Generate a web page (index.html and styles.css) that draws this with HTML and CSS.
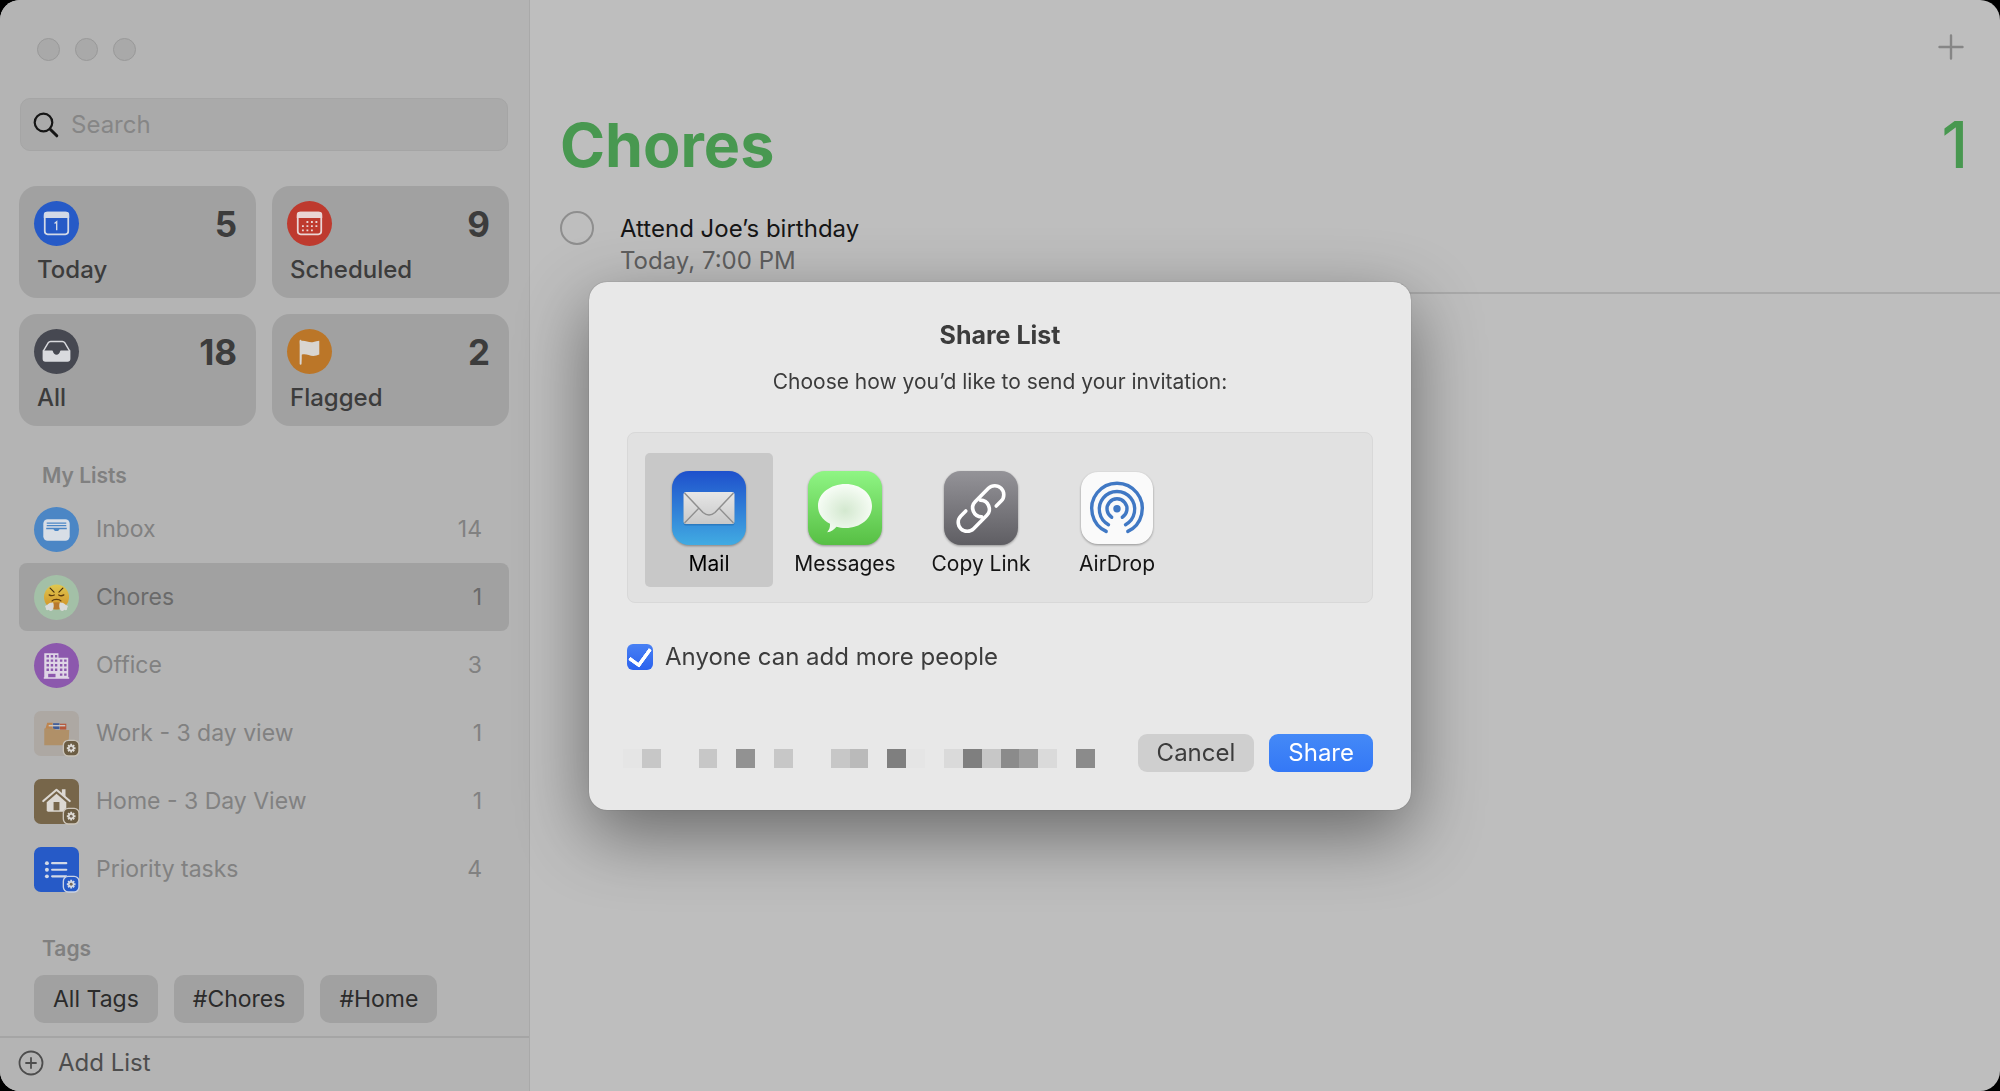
FILE: index.html
```html
<!DOCTYPE html>
<html lang="en">
<head>
<meta charset="utf-8">
<meta name="viewport" content="width=device-width, initial-scale=1">
<title>Reminders</title>
<link rel="stylesheet" href="styles.css">
</head>
<body>
<svg class="defs" aria-hidden="true">
  <defs>
    <symbol id="gear" viewBox="0 0 18 18">
      <g stroke="currentColor" stroke-width="2.2" stroke-linecap="butt">
        <path d="M9 4v10M4 9h10M5.500 5.500l7 7M12.500 5.500l-7 7"/>
      </g>
      <circle cx="9" cy="9" r="3.500" fill="currentColor"/>
      <circle cx="9" cy="9" r="1.700" fill="#77695a"/>
    </symbol>
    <linearGradient id="mail-bg" x1="0" y1="0" x2="0" y2="1"><stop offset="0" stop-color="#1e50cc"/><stop offset="1" stop-color="#41abe2"/></linearGradient>
    <linearGradient id="letter" x1="0" y1="0" x2="0" y2="1"><stop offset="0" stop-color="#e6e6e6"/><stop offset="1" stop-color="#c9c9c9"/></linearGradient>
    <linearGradient id="msg-bg" x1="0" y1="0" x2="0" y2="1"><stop offset="0" stop-color="#8ff584"/><stop offset="1" stop-color="#57bf44"/></linearGradient>
    <radialGradient id="bubble" cx=".5" cy=".55" r=".6"><stop offset="0" stop-color="#d3e8cf"/><stop offset="1" stop-color="#fbfffa"/></radialGradient>
    <linearGradient id="link-bg" x1="0" y1="0" x2="0" y2="1"><stop offset="0" stop-color="#949398"/><stop offset="1" stop-color="#5f5e63"/></linearGradient>
    <linearGradient id="face" x1="0" y1="0" x2="0" y2="1"><stop offset="0" stop-color="#dfc850"/><stop offset="1" stop-color="#d08f25"/></linearGradient>
  </defs>
</svg>

<div class="window">
  <aside class="sidebar">
    <div class="lights"><i></i><i></i><i></i></div>

    <label class="search">
      <svg width="26" height="26" viewBox="0 0 26 26" fill="none" stroke="#161616" stroke-linecap="round" aria-hidden="true"><circle cx="10.500" cy="10.500" r="8.800" stroke-width="2.200"/><path d="M17.200 17.200l6.600 6.600" stroke-width="3"/></svg>
      <input type="search" placeholder="Search" aria-label="Search">
    </label>

    <nav class="cards" aria-label="Smart lists">
      <a class="card" href="#today">
        <svg class="icon" viewBox="0 0 46 46" aria-hidden="true"><circle cx="23" cy="23" r="23" fill="#265ac7"/><rect x="11" y="12" width="24" height="22" rx="3" fill="none" stroke="#d3d9e6" stroke-width="1.800"/><path d="M10 17.500V14a3 3 0 0 1 3-3h20a3 3 0 0 1 3 3v3.500z" fill="#d3d9e6"/><path d="M21 23l2.200-1.800V30" fill="none" stroke="#d3d9e6" stroke-width="1.400"/></svg>
        <b>5</b><span>Today</span>
      </a>
      <a class="card" href="#scheduled">
        <svg class="icon" viewBox="0 0 46 46" aria-hidden="true"><circle cx="23" cy="23" r="23" fill="#be3a2e"/><rect x="11" y="12" width="24" height="22" rx="3" fill="none" stroke="#ead5d4" stroke-width="1.800"/><path d="M10 17.500V14a3 3 0 0 1 3-3h20a3 3 0 0 1 3 3v3.500z" fill="#ead5d4"/><path d="M19.900 21.500h13M15.300 25.700h18M15.300 30h12" stroke="#ead5d4" stroke-width="1.900" stroke-dasharray="1.900 2.700"/></svg>
        <b>9</b><span>Scheduled</span>
      </a>
      <a class="card" href="#all">
        <svg class="icon" viewBox="0 0 46 46" aria-hidden="true"><circle cx="23" cy="23" r="23" fill="#464851"/><path d="M9.500 22.500L14.600 14a3 3 0 0 1 2.400-1.300h12a3 3 0 0 1 2.400 1.300l5.100 8.500" fill="none" stroke="#d9dade" stroke-width="1.500"/><path d="M8.800 22h9.600c.6 0 .9.400 1 1 .4 1.900 1.800 3.200 3.600 3.200s3.200-1.300 3.600-3.200c.1-.6.400-1 1-1h9.600v8.500a3 3 0 0 1-3 3H11.800a3 3 0 0 1-3-3z" fill="#d9dade"/></svg>
        <b>18</b><span>All</span>
      </a>
      <a class="card" href="#flagged">
        <svg class="icon" viewBox="0 0 46 46" aria-hidden="true"><circle cx="23" cy="23" r="23" fill="#bb7628"/><path d="M13 12.500c5-2 9 2 14 .8 2-.4 4-1 6-1.300V26c-2 .8-4 1.500-6 1.500-4.500 0-7.500-2.800-12.200-1.300V36" fill="#d8d5d1"/><path d="M13.900 12v23.500" stroke="#d8d5d1" stroke-width="1.900" stroke-linecap="round"/></svg>
        <b>2</b><span>Flagged</span>
      </a>
    </nav>

    <h2 class="group">My Lists</h2>
    <nav class="lists" aria-label="My Lists">
      <a class="row" href="#inbox">
        <svg class="icon" viewBox="0 0 46 46" aria-hidden="true"><circle cx="23" cy="23" r="23" fill="#4b86c5"/><rect x="9.500" y="12.500" width="27" height="22" rx="4.500" fill="#d8dee6"/><path d="M13 16.500h20M13 19h20M12.500 22h21" stroke="#4b86c5" stroke-width="1.400"/><path d="M20 22h6c0 1.800-1.200 2.600-3 2.600s-3-.8-3-2.600z" fill="#4b86c5"/></svg>
        <span>Inbox</span><em>14</em>
      </a>
      <a class="row row-selected" href="#chores" aria-current="page">
        <svg class="icon" viewBox="0 0 46 46" aria-hidden="true"><circle cx="23" cy="23" r="23" fill="#a3c0a7"/><circle cx="23" cy="22.500" r="12.800" fill="url(#face)"/><path d="M16.500 13.500l4 4M29.500 13.500l-4 4" stroke="#45300f" stroke-width="1.200" stroke-linecap="round"/><path d="M15.500 20.300c1.500 1 3.500 1 5.200.1M25.300 20.400c1.500 1 3.500 1 5.200-.1M18.500 26.500c1.500-2 7.500-2 9 0" fill="none" stroke="#5b3c10" stroke-width="1.300" stroke-linecap="round"/><path d="M20 28h6v7h-6z" fill="#b87a30"/><path d="M19.500 28c1 2.500 1 5-.6 8-1.600 1.400-3.200.6-3.900-.4-2 .9-3.500-.3-2.700-1.900-1.700-.9-.8-3 1-2.700 1.200-2.700 4.400-2.700 6.200-3zM26.500 28c-1 2.500-1 5 .6 8 1.600 1.400 3.200.6 3.900-.4 2 .9 3.500-.3 2.700-1.900 1.700-.9.800-3-1-2.700-1.200-2.700-4.400-2.700-6.200-3z" fill="#d9dad9"/></svg>
        <span>Chores</span><em>1</em>
      </a>
      <a class="row" href="#office">
        <svg class="icon" viewBox="0 0 46 46" aria-hidden="true"><circle cx="23" cy="23" r="23" fill="#8c58ad"/><path d="M10.500 10.500h14.500v4.500h10v20h1v1.500H10V35h.5z" fill="#dfd6e6"/><path d="M12.800 13.500h11M12.800 18h11M12.800 22.700h11M12.800 27.400h11M26.500 18h7.500M26.500 22.700h7.500M26.500 27.400h7.500M26.500 32.300h7.500" stroke="#8c58ad" stroke-width="2.500" stroke-dasharray="2.500 1.800"/><path d="M14.500 31.500h7.500v3.500h-7.500z" fill="#8c58ad"/></svg>
        <span>Office</span><em>3</em>
      </a>
      <a class="row" href="#work">
        <svg class="icon" viewBox="0 0 46 46" aria-hidden="true"><rect width="46" height="46" rx="7" fill="#ada8a3"/><path d="M12 17l1.500-5h5.500v7h-8z" fill="#bd8550"/><path d="M19.500 12.500h6.500v6h-6.500z" fill="#3c5a97"/><path d="M26.500 13h6.500v6h-6.500z" fill="#b5573a"/><path d="M15 15h17" stroke="#c8c6c4" stroke-width="1.500"/><path d="M10.500 18h10l2 1.500H36L35.300 35H10.500z" fill="#b09068"/><rect x="30" y="30" width="16" height="16" rx="5" fill="#6c5d43" stroke="#c8c2b8" stroke-width="1.400"/><use href="#gear" x="30" y="30" width="16" height="16" color="#dedbd5"/></svg>
        <span>Work - 3 day view</span><em>1</em>
      </a>
      <a class="row" href="#home">
        <svg class="icon" viewBox="0 0 46 46" aria-hidden="true"><rect width="46" height="46" rx="7" fill="#77664a"/><path d="M9.500 22.500L23 11l13.500 11.500" fill="none" stroke="#dcd8d2" stroke-width="2.200" stroke-linecap="round" stroke-linejoin="round"/><path d="M28.500 10.500h3.700v8l-3.700-3z" fill="#dcd8d2"/><path d="M13 23.700l10-8.500 10 8.500V32q0 1.500-1.500 1.500h-17Q13 33.500 13 32z" fill="#dcd8d2"/><path d="M20 23.500h6V32h-6z" fill="#77664a"/><rect x="30" y="30" width="16" height="16" rx="5" fill="#6c5d43" stroke="#cdc6bb" stroke-width="1.400"/><use href="#gear" x="30" y="30" width="16" height="16" color="#dedbd5"/></svg>
        <span>Home - 3 Day View</span><em>1</em>
      </a>
      <a class="row" href="#priority">
        <svg class="icon" viewBox="0 0 46 46" aria-hidden="true"><rect width="46" height="46" rx="7" fill="#265ac7"/><path d="M18.500 16.500H33M18.500 23.300H33M18.500 30H33" stroke="#d3d9e6" stroke-width="2.200" stroke-linecap="round"/><g fill="#d3d9e6"><circle cx="13.200" cy="16.500" r="2"/><circle cx="13.200" cy="23.300" r="2"/><circle cx="13.200" cy="30" r="2"/></g><rect x="30" y="30" width="16" height="16" rx="5" fill="#265ac7" stroke="#c9d2e4" stroke-width="1.400"/><use href="#gear" x="30" y="30" width="16" height="16" color="#d3d9e6"/></svg>
        <span>Priority tasks</span><em>4</em>
      </a>
    </nav>

    <h2 class="group group-tags">Tags</h2>
    <div class="tags">
      <button type="button">All Tags</button>
      <button type="button">#Chores</button>
      <button type="button">#Home</button>
    </div>

    <footer class="sidebar-foot">
      <button type="button" class="add-list">
        <svg width="26" height="26" viewBox="0 0 26 26" fill="none" stroke="#4d4d4d" stroke-width="1.800" stroke-linecap="round" aria-hidden="true"><circle cx="13" cy="13" r="11.500"/><path d="M13 8v10M8 13h10"/></svg>
        Add List
      </button>
    </footer>
  </aside>

  <main class="main">
    <div class="toolbar">
      <button type="button" class="add" aria-label="New reminder">
        <svg width="26" height="26" viewBox="0 0 26 26" fill="none" stroke="#868686" stroke-width="2.400" stroke-linecap="round" aria-hidden="true"><path d="M13 1.500v23M1.500 13h23"/></svg>
      </button>
    </div>
    <header class="title">
      <h1>Chores</h1>
      <span class="total">1</span>
    </header>
    <div class="reminder">
      <input type="checkbox" id="r1">
      <div class="reminder-text">
        <label for="r1">Attend Joe’s birthday</label>
        <p>Today, 7:00 PM</p>
      </div>
    </div>
  </main>
</div>

<div class="overlay">
  <section class="sheet" role="dialog" aria-modal="true" aria-labelledby="sheet-title">
    <h2 id="sheet-title">Share List</h2>
    <p class="hint">Choose how you’d like to send your invitation:</p>

    <div class="methods">
      <button type="button" class="method method-selected">
        <svg viewBox="0 0 74 74" aria-hidden="true"><rect width="74" height="74" rx="17" fill="url(#mail-bg)"/><rect x="11.500" y="22.500" width="51" height="32" rx="2.500" fill="#14508c" opacity=".35"/><rect x="11.500" y="21" width="51" height="32" rx="2.500" fill="url(#letter)"/><path d="M12.500 52L27 37M61.500 52L47 37" stroke="#8f8f8f" stroke-width="1.300"/><path d="M12.500 22l18.500 19.500q6 5 12 0L61.500 22" fill="none" stroke="#8f8f8f" stroke-width="1.500"/></svg>
        Mail
      </button>
      <button type="button" class="method">
        <svg viewBox="0 0 74 74" aria-hidden="true"><rect width="74" height="74" rx="17" fill="url(#msg-bg)"/><path d="M37.500 13C52.500 13 64 22.500 64 35S52.500 57 37.500 57c-3.400 0-6.300-.4-9-1.300-2.500 3-5.500 5-9.300 5.600 2-2.500 3-5 2.800-8.500C14.500 49 10 42.500 10 35c0-12.500 12.500-22 27.500-22z" fill="url(#bubble)"/></svg>
        Messages
      </button>
      <button type="button" class="method">
        <svg viewBox="0 0 74 74" aria-hidden="true"><rect width="74" height="74" rx="17" fill="url(#link-bg)"/><g transform="translate(37 37.500) rotate(-45)" fill="none" stroke="#fff" stroke-width="3.600" stroke-linecap="round"><path d="M12.500 9H19.500a9 9 0 0 0 0-18H1a9 9 0 0 0-6.400 15.400"/><path d="M-12.500-9H-19.500a9 9 0 0 0 0 18H-1A9 9 0 0 0 5.400-6.400"/></g></svg>
        Copy Link
      </button>
      <button type="button" class="method">
        <svg viewBox="0 0 74 74" aria-hidden="true"><rect x="1" y="1" width="72" height="72" rx="17" fill="#fafafa"/><g fill="none" stroke="#4078c4" stroke-width="3.400" stroke-linecap="round"><path d="M26.200 60.400a25.300 25.300 0 1 1 21.600 0"/><path d="M28.500 53.700a17.700 17.700 0 1 1 17 0"/><path d="M31.700 46.300a10 10 0 1 1 10.600 0"/></g><circle cx="37" cy="37.800" r="3.700" fill="#4078c4"/></svg>
        AirDrop
      </button>
    </div>

    <label class="permit"><input type="checkbox" checked>Anyone can add more people</label>

    <div class="actions">
      <svg class="redacted" viewBox="0 0 25 1" preserveAspectRatio="none" shape-rendering="crispEdges" aria-hidden="true">
        <path fill="#e5e5e5" d="M0 0h1v1H0zM15 0h1v1h-1z"/><path fill="#c7c7c7" d="M1 0h1v1H1zM4 0h1v1H4zM8 0h1v1H8zM11 0h1v1h-1zM19 0h1v1h-1z"/><path fill="#929292" d="M6 0h1v1H6z"/><path fill="#bababa" d="M12 0h1v1h-1z"/><path fill="#7f7f7f" d="M14 0h1v1h-1zM18 0h1v1h-1z"/><path fill="#dadada" d="M17 0h1v1h-1zM22 0h1v1h-1z"/><path fill="#8b8b8b" d="M20 0h1v1h-1zM24 0h1v1h-1z"/><path fill="#9f9f9f" d="M21 0h1v1h-1z"/>
      </svg>
      <button type="button" class="btn">Cancel</button>
      <button type="button" class="btn btn-primary">Share</button>
    </div>
  </section>
</div>
</body>
</html>
```

FILE: styles.css
```css
* { box-sizing: border-box; }

body {
  margin: 0;
  background: #000;
  color: #3c3c3c;
  font: 400 24px/32px Inter, "Liberation Sans", sans-serif;
}

h1, h2, p { margin: 0; }
a { color: inherit; text-decoration: none; }
button {
  margin: 0;
  padding: 0;
  border: 0;
  background: none;
  color: inherit;
  font: inherit;
}
input { margin: 0; font: inherit; }
svg { display: block; flex: none; }
.defs { position: absolute; width: 0; height: 0; }

.window {
  display: flex;
  min-height: 100vh;
  border-radius: 20px;
  overflow: hidden;
  background: #bebebe;
}

/* Sidebar */
.sidebar {
  display: flex;
  flex-direction: column;
  flex: none;
  width: 530px;
  padding: 38px 20px 0 19px;
  border-right: 1px solid #a9a9a9;
  background: #b4b4b4;
}

.lights { display: flex; gap: 15px; padding-left: 18px; }
.lights i {
  width: 23px;
  height: 23px;
  border: 1px solid #999;
  border-radius: 50%;
  background: #a9a9a9;
}

.search {
  display: flex;
  align-items: center;
  gap: 12px;
  height: 53px;
  margin: 37px 1px 35px;
  padding: 0 12px;
  border: 1px solid #a5a5a5;
  border-radius: 10px;
  background: #aaa;
}
.search input {
  flex: 1;
  min-width: 0;
  padding: 0;
  border: 0;
  outline: 0;
  background: none;
  appearance: none;
}
.search input::placeholder { color: #868686; opacity: 1; }

.cards { display: grid; grid-template-columns: 1fr 1fr; gap: 16px; }
.card {
  display: grid;
  grid-template-columns: 1fr auto;
  align-items: center;
  row-gap: 8px;
  height: 112px;
  padding: 14px 19px 14px 15px;
  border-radius: 18px;
  background: #a1a1a1;
}
.card b { font-size: 35px; font-weight: 700; line-height: 46px; }
.card span { padding-left: 3px; font-weight: 500; line-height: 28px; }
.icon { width: 45px; height: 45px; overflow: visible; }

.group {
  margin: 36px 0 5px 23px;
  color: #808080;
  font-size: 21px;
  font-weight: 600;
  line-height: 28px;
}
.group-tags { margin: 32px 0 12px 23px; }

.lists { display: flex; flex-direction: column; color: #818181; font-size: 23px; }
.row {
  display: flex;
  align-items: center;
  gap: 17px;
  height: 68px;
  padding: 0 27px 0 15px;
  border-radius: 8px;
}
.row span { flex: 1; }
.row em { font-style: normal; }
.row-selected { background: #a1a1a1; color: #6a6a6a; }

.tags { display: flex; gap: 16px; padding-left: 15px; margin-bottom: 12px; }
.tags button {
  height: 48px;
  padding: 0 19px;
  border-radius: 10px;
  background: #a1a1a1;
  color: #2b2b2b;
  font-size: 23px;
}

.sidebar-foot {
  display: flex;
  align-items: center;
  height: 55px;
  margin: auto -20px 0 -19px;
  padding: 0 0 3px 18px;
  border-top: 2px solid #a5a5a5;
}
.add-list { display: flex; align-items: center; gap: 14px; color: #4d4d4d; }

/* Reminders */
.main { flex: 1; min-width: 0; padding: 34px 0 0 30px; }
.toolbar { display: flex; justify-content: flex-end; padding-right: 36px; }
.title {
  display: flex;
  justify-content: space-between;
  padding: 46px 32px 0 0;
  color: #489850;
  font-size: 64px;
  line-height: 78px;
}
.title h1 { font-size: 61px; font-weight: 700; line-height: inherit; }
.total { font-weight: 500; }

.reminder { display: flex; gap: 26px; margin-top: 27px; }
.reminder input {
  appearance: none;
  flex: none;
  width: 34px;
  height: 34px;
  border: 2px solid #8e8e8e;
  border-radius: 50%;
}
.reminder-text { flex: 1; padding: 2px 0 15px; border-bottom: 2px solid #a9a9a9; }
.reminder-text label { display: block; color: #161616; }
.reminder-text p { color: #5f5f5f; }

/* Share sheet */
.overlay { position: fixed; inset: 0; display: grid; place-items: center; }
.sheet {
  width: 822px;
  padding: 37px 38px 38px;
  border-radius: 18px;
  background: #e8e8e8;
  box-shadow: 0 0 1px rgba(0, 0, 0, .5), 0 24px 70px rgba(0, 0, 0, .45);
}
.sheet h2 { font-size: 25px; font-weight: 700; line-height: 32px; text-align: center; }
.hint { margin: 16px 0 35px; font-size: 21px; line-height: 30px; text-align: center; }

.methods {
  display: flex;
  gap: 8px;
  padding: 20px 17px 15px;
  border: 1px solid #d8d8d8;
  border-radius: 8px;
  background: #e1e1e1;
}
.method {
  display: flex;
  flex-direction: column;
  align-items: center;
  gap: 4px;
  width: 128px;
  height: 134px;
  padding-top: 18px;
  border-radius: 5px;
  color: #141414;
  font-size: 21px;
  line-height: 30px;
}
.method-selected { background: #c8c8c8; color: #000; }
.method svg { width: 74px; height: 74px; filter: drop-shadow(0 1px 1px rgba(0, 0, 0, .35)); }

.permit { display: flex; align-items: center; gap: 12px; margin-top: 38px; }
.permit input {
  appearance: none;
  width: 26px;
  height: 26px;
  border-radius: 6px;
  background: linear-gradient(#4880f4, #2b62ee);
  display: grid;
  place-items: center;
}
.permit input:checked::after {
  content: "";
  width: 10px;
  height: 18px;
  margin-bottom: 4px;
  border: solid #fff;
  border-width: 0 4px 4px 0;
  border-radius: 2px;
  transform: rotate(36deg);
}

.actions { display: flex; gap: 15px; margin-top: 61px; }
.redacted { width: 472px; height: 19px; margin: 15px auto 0 -4px; }
.btn {
  height: 38px;
  padding: 0 19px;
  border-radius: 9px;
  background: #cfcfcf;
}
.btn-primary { background: linear-gradient(#4489f7, #3478f6); color: #fff; }
```
